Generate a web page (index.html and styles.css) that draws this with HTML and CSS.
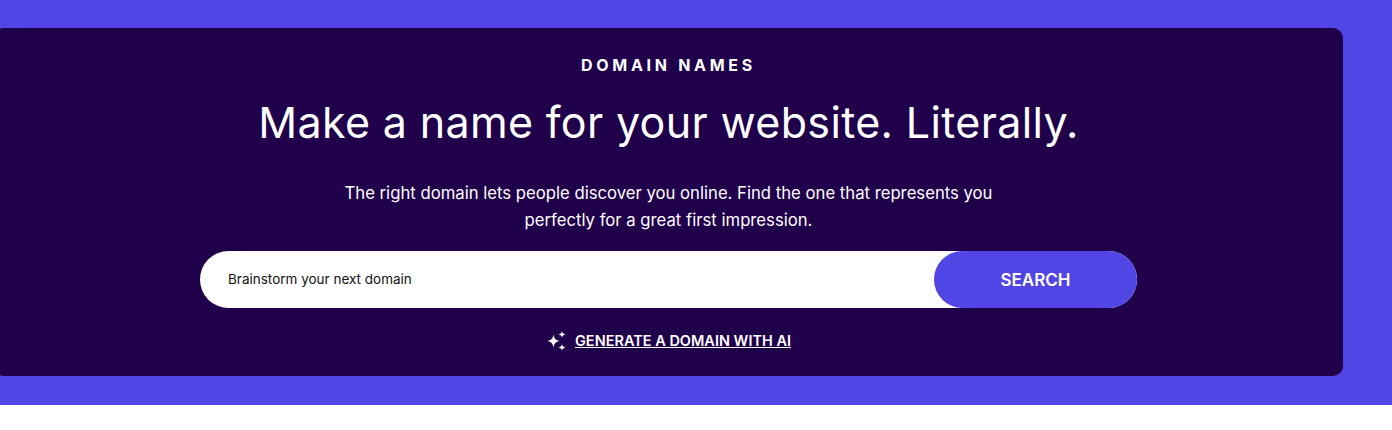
FILE: index.html
```html
<!DOCTYPE html>
<html lang="en">
<head>
    <meta charset="UTF-8">
    <meta name="viewport" content="width=device-width, initial-scale=1.0">
    <title>Domain Names</title>
    <link rel="stylesheet" href="styles.css">
</head>
<body>
    <section class="hero">
        <div class="card">
            <div class="eyebrow">DOMAIN NAMES</div>
            <h1>Make a name for your website. Literally.</h1>
            <p class="intro">The right domain lets people discover you online. Find the one that represents you<br>perfectly for a great first impression.</p>
            <form class="search">
                <input class="search-input" type="text" placeholder="Brainstorm your next domain">
                <button class="search-button" type="button">SEARCH</button>
            </form>
            <div class="ai-row">
                <svg class="sparkle" width="20" height="20" viewBox="0 0 20 20" fill="#fff">
                    <path d="M7.5 3.5 C8.3 7.6 9.6 9.2 14 10 C9.6 10.8 8.3 12.4 7.5 16.5 C6.7 12.4 5.4 10.8 1 10 C5.4 9.2 6.7 7.6 7.5 3.5Z"/>
                    <path d="M16 0 C16.4 2.2 17.2 3 19.5 3.4 C17.2 3.8 16.4 4.6 16 6.8 C15.6 4.6 14.8 3.8 12.5 3.4 C14.8 3 15.6 2.2 16 0Z"/>
                    <path d="M16 13 C16.4 15.2 17.2 16 19.5 16.4 C17.2 16.8 16.4 17.6 16 19.8 C15.6 17.6 14.8 16.8 12.5 16.4 C14.8 16 15.6 15.2 16 13Z"/>
                </svg>
                <a class="ai-link" href="#">GENERATE A DOMAIN WITH AI</a>
            </div>
        </div>
    </section>
</body>
</html>
```

FILE: styles.css
```css
html {
    overflow: hidden;
}
body {
    font-family: 'Inter', 'Liberation Sans', sans-serif;
    margin: 0;
    background-color: #fff;
    color: #fff;
}
.hero {
    background-color: #5245e5;
    padding: 28px 49px 29px 0;
}
.card {
    margin-left: -6px;
    height: 348px;
    box-sizing: border-box;
    padding-top: 28px;
    background-color: #20004b;
    border-radius: 10px;
    display: flex;
    flex-direction: column;
    align-items: center;
}
.eyebrow {
    font-size: 16px;
    font-weight: 700;
    line-height: 18px;
    letter-spacing: 3.7px;
}
h1 {
    margin: 21px 0 0;
    font-size: 43px;
    font-weight: 400;
    line-height: 54px;
    letter-spacing: 0.35px;
}
.intro {
    margin: 31px 0 0;
    font-size: 16.7px;
    line-height: 27px;
    text-align: center;
}
.search {
    display: flex;
    width: 937px;
    height: 57px;
    margin-top: 17px;
    background-color: #fff;
    border-radius: 29px;
}
.search-input {
    flex: 1;
    min-width: 0;
    border: none;
    outline: none;
    background: none;
    padding: 0 28px 2px;
    font-family: inherit;
    font-size: 13.5px;
    color: #000;
}
.search-input::placeholder {
    color: #111;
    opacity: 1;
}
.search-button {
    width: 203px;
    border: none;
    border-radius: 29px;
    background-color: #5245e5;
    color: #fff;
    font-family: inherit;
    font-size: 17px;
    font-weight: 600;
    cursor: pointer;
}
.ai-row {
    display: flex;
    align-items: center;
    gap: 9px;
    margin-top: 23px;
}
.ai-link {
    color: #fff;
    font-size: 14.5px;
    font-weight: 600;
    line-height: 20px;
}
```
